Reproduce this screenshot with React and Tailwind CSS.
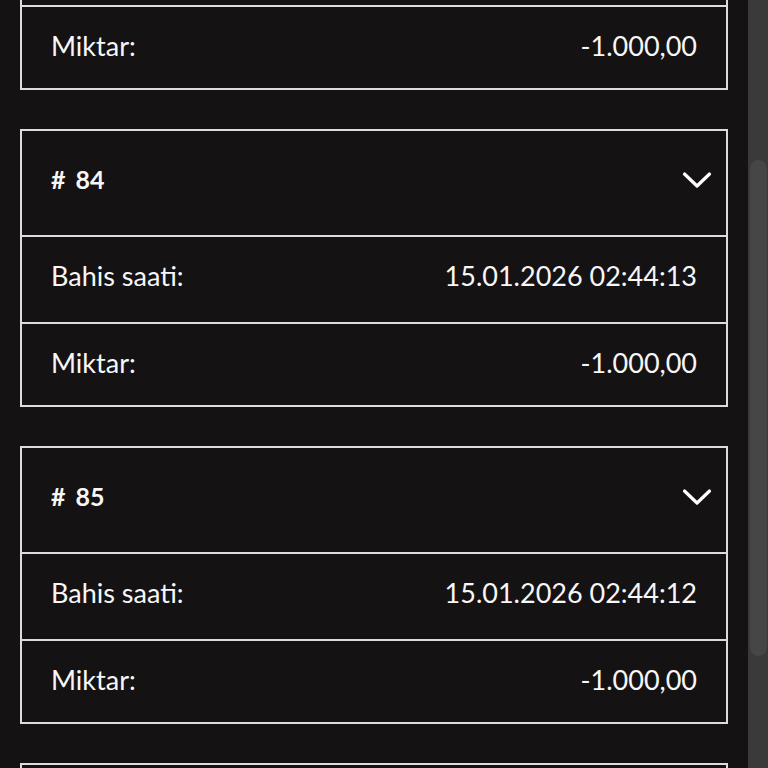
const bets = [
  { id: 83, time: "15.01.2026 02:44:14", amount: "-1.000,00" },
  { id: 84, time: "15.01.2026 02:44:13", amount: "-1.000,00" },
  { id: 85, time: "15.01.2026 02:44:12", amount: "-1.000,00" },
  { id: 86, time: "15.01.2026 02:44:11", amount: "-1.000,00" }
];

const Chevron = () => (
  <svg width="30" height="18" viewBox="0 0 30 18" fill="none">
    <polyline
      points="2.5,3 15,15 27.5,3"
      stroke="#ffffff"
      strokeWidth="3.2"
      strokeLinecap="round"
      strokeLinejoin="round"
    />
  </svg>
);

const BetCard = ({ bet }) => (
  <div className="border-2 border-[#dcdcdc]">
    {/* Header */}
    <div className="h-[106px] flex items-center justify-between pl-[29px] pr-[14px] pb-[7px] border-b-2 border-[#dcdcdc]">
      <span className="text-[25px] font-bold flex gap-[10px]">
        <span>#</span>
        <span>{bet.id}</span>
      </span>
      <Chevron />
    </div>
    <div className="h-[87px] flex items-center justify-between px-[29px] pb-[7px] border-b-2 border-[#dcdcdc]">
      <span>Bahis saati:</span>
      <span>{bet.time}</span>
    </div>
    <div className="h-[81px] flex items-center justify-between px-[29px] pb-[3px]">
      <span>Miktar:</span>
      <span>{bet.amount}</span>
    </div>
  </div>
);

export default function App() {
  return (
    <div
      className="h-screen w-full flex overflow-hidden bg-[#151213] text-[#f7f7f7] text-[27px]"
      style={{ fontFamily: "Lato, 'Noto Sans', sans-serif" }}
    >
      <div className="flex-1 px-5 overflow-hidden">
        <div className="-mt-[188px] flex flex-col gap-[39px]">
          {bets.map((bet) => (
            <BetCard key={bet.id} bet={bet} />
          ))}
        </div>
      </div>

      {/* Scrollbar */}
      <div className="w-[20px] bg-[#3a3a3a] flex justify-center">
        <div className="mt-[160px] h-[496px] w-[17px] rounded-full bg-[#464646]" />
      </div>
    </div>
  );
}
